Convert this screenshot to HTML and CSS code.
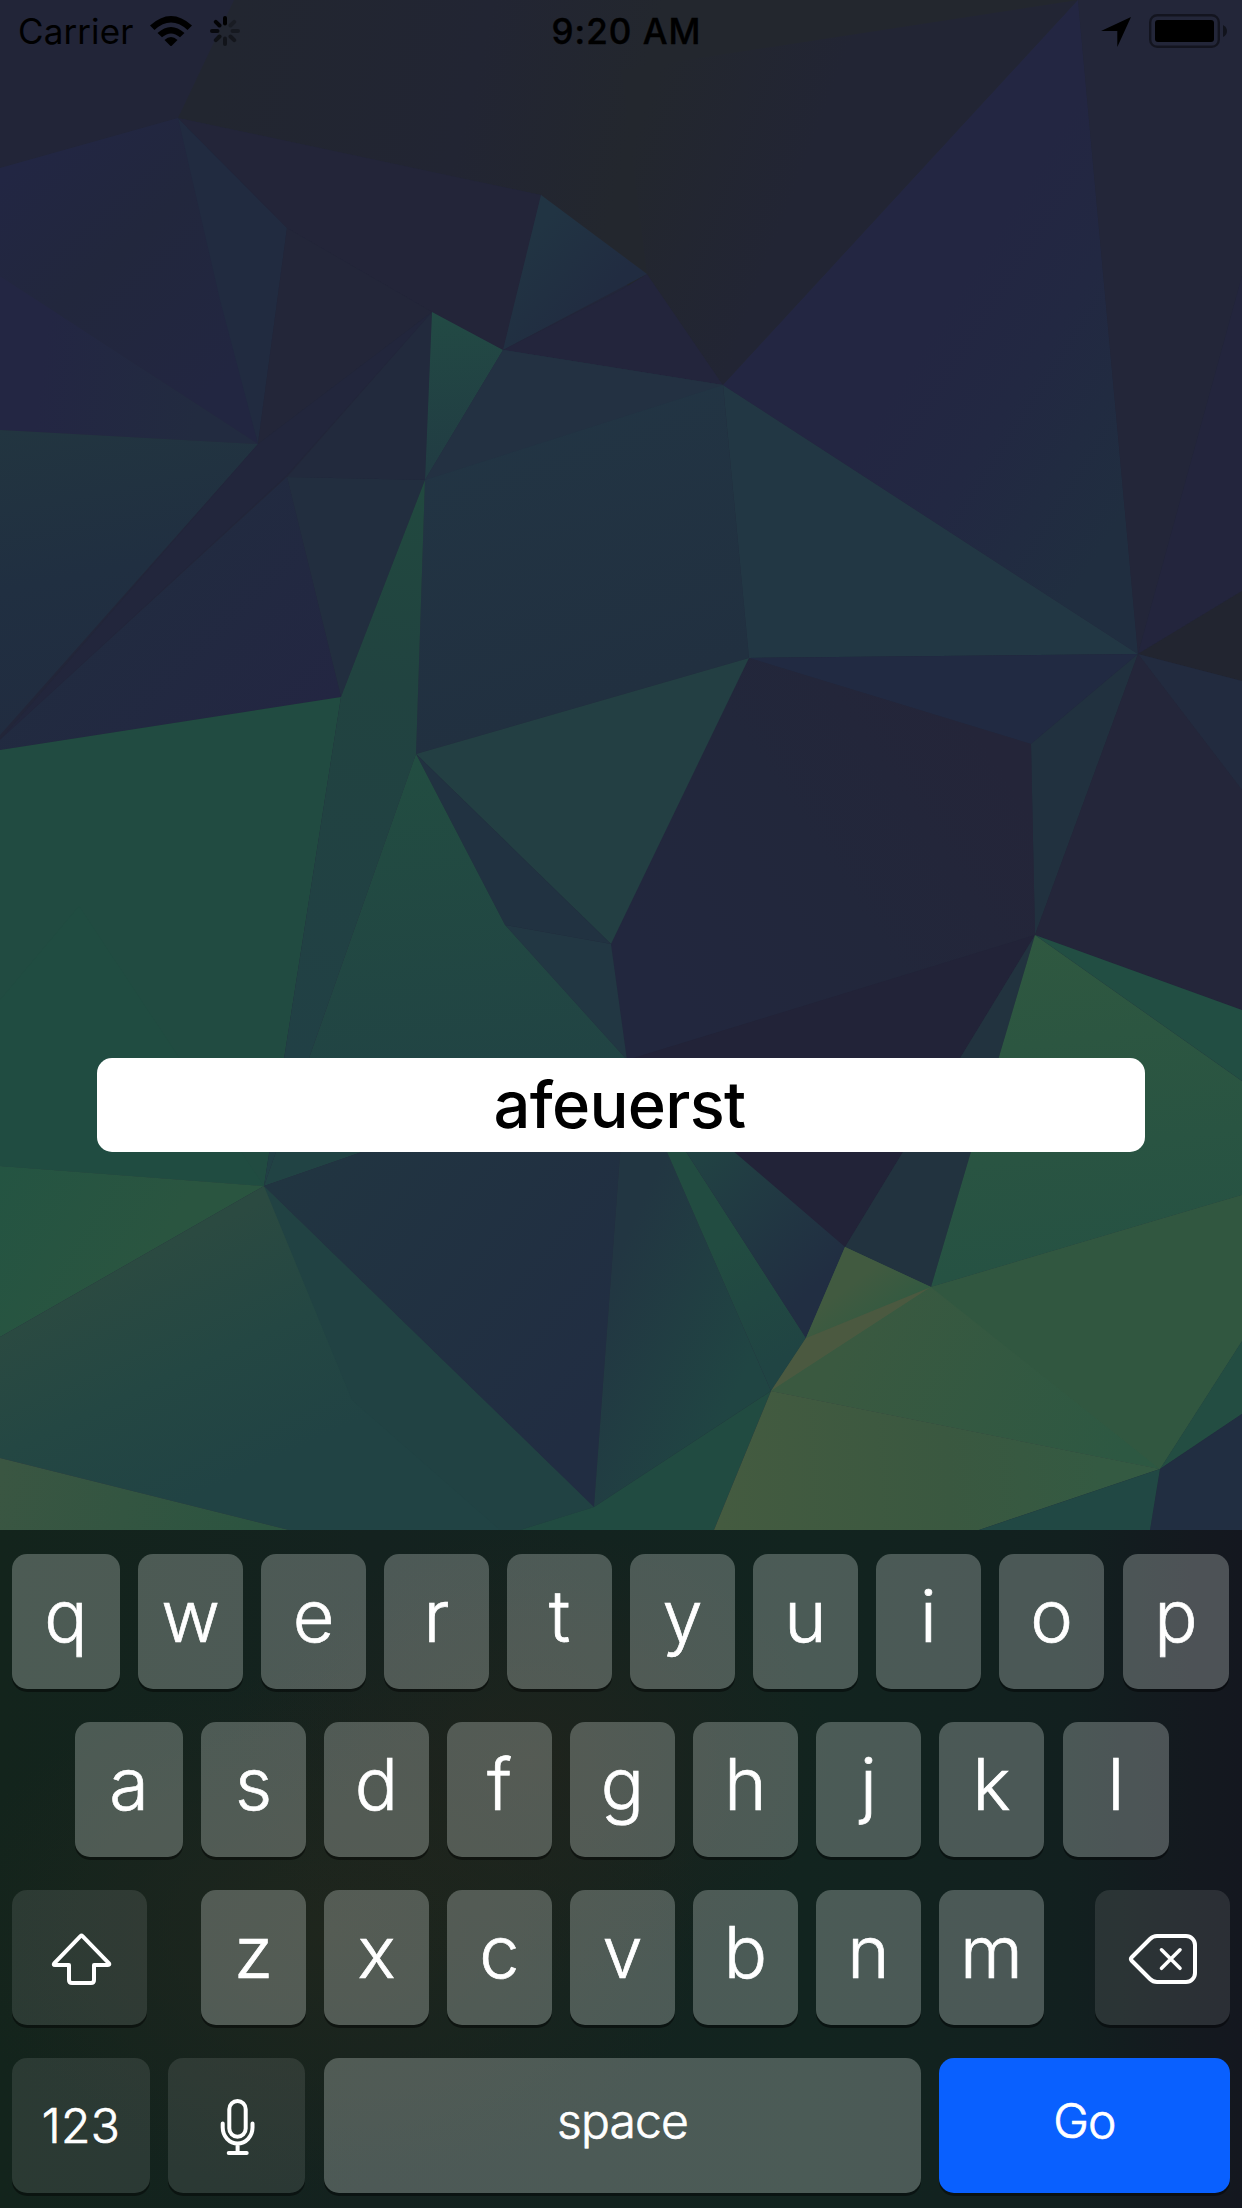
FILE: index.html
```html
<!DOCTYPE html>
<html lang="en">
<head>
<meta charset="utf-8">
<title>Username</title>
<link rel="stylesheet" href="styles.css">
</head>
<body>
<main class="screen">
  <svg class="wallpaper" viewBox="0 0 1242 1530" preserveAspectRatio="none" aria-hidden="true">
    <defs>
      <linearGradient id="sky" gradientUnits="userSpaceOnUse" x1="234" y1="0" x2="640" y2="100"><stop offset="0" stop-color="#222630"/><stop offset=".6" stop-color="#222533"/><stop offset="1" stop-color="#23272e"/></linearGradient>
      <linearGradient id="night" gradientUnits="userSpaceOnUse" x1="640" y1="120" x2="800" y2="180"><stop offset="0" stop-color="#23272e"/><stop offset="1" stop-color="#222534"/></linearGradient>
      <linearGradient id="west" gradientUnits="userSpaceOnUse" x1="0" y1="180" x2="200" y2="400"><stop offset="0" stop-color="#222643"/><stop offset=".45" stop-color="#22273d"/><stop offset="1" stop-color="#222641"/></linearGradient>
      <linearGradient id="slope" gradientUnits="userSpaceOnUse" x1="40" y1="380" x2="200" y2="400"><stop offset="0" stop-color="#232643"/><stop offset="1" stop-color="#222b40"/></linearGradient>
      <linearGradient id="peak" gradientUnits="userSpaceOnUse" x1="530" y1="240" x2="600" y2="300"><stop offset="0" stop-color="#213443"/><stop offset="1" stop-color="#212c41"/></linearGradient>
      <linearGradient id="blue" gradientUnits="userSpaceOnUse" x1="900" y1="380" x2="1120" y2="520"><stop offset="0" stop-color="#232642"/><stop offset=".4" stop-color="#222842"/><stop offset="1" stop-color="#202e40"/></linearGradient>
      <linearGradient id="lake" gradientUnits="userSpaceOnUse" x1="0" y1="430" x2="60" y2="740"><stop offset="0" stop-color="#223540"/><stop offset=".5" stop-color="#202f41"/><stop offset="1" stop-color="#212c40"/></linearGradient>
      <linearGradient id="dusk" gradientUnits="userSpaceOnUse" x1="150" y1="560" x2="310" y2="720"><stop offset="0" stop-color="#212b40"/><stop offset="1" stop-color="#232642"/></linearGradient>
      <linearGradient id="sliver" gradientUnits="userSpaceOnUse" x1="425" y1="480" x2="300" y2="1057"><stop offset="0" stop-color="#21493f"/><stop offset=".35" stop-color="#214340"/><stop offset="1" stop-color="#214045"/></linearGradient>
      <linearGradient id="fin" gradientUnits="userSpaceOnUse" x1="432" y1="312" x2="440" y2="480"><stop offset="0" stop-color="#224a44"/><stop offset="1" stop-color="#213b43"/></linearGradient>
      <linearGradient id="grove" gradientUnits="userSpaceOnUse" x1="416" y1="754" x2="450" y2="1100"><stop offset="0" stop-color="#224d41"/><stop offset="1" stop-color="#214344"/></linearGradient>
      <linearGradient id="meadow" gradientUnits="userSpaceOnUse" x1="130" y1="1262" x2="230" y2="1480"><stop offset="0" stop-color="#2b4a41"/><stop offset=".5" stop-color="#244743"/><stop offset="1" stop-color="#214344"/></linearGradient>
      <linearGradient id="hill" gradientUnits="userSpaceOnUse" x1="0" y1="1166" x2="150" y2="1260"><stop offset="0" stop-color="#245442"/><stop offset="1" stop-color="#2a5540"/></linearGradient>
      <linearGradient id="plum" gradientUnits="userSpaceOnUse" x1="680" y1="1000" x2="1010" y2="780"><stop offset="0" stop-color="#22273e"/><stop offset=".5" stop-color="#22273b"/><stop offset="1" stop-color="#242539"/></linearGradient>
      <linearGradient id="deep" gradientUnits="userSpaceOnUse" x1="300" y1="1150" x2="600" y2="1400"><stop offset="0" stop-color="#213541"/><stop offset="1" stop-color="#212d42"/></linearGradient>
      <linearGradient id="mist" gradientUnits="userSpaceOnUse" x1="610" y1="1270" x2="760" y2="1340"><stop offset="0" stop-color="#223642"/><stop offset="1" stop-color="#204543"/></linearGradient>
      <linearGradient id="stem" gradientUnits="userSpaceOnUse" x1="680" y1="1170" x2="780" y2="1360"><stop offset="0" stop-color="#224c41"/><stop offset=".4" stop-color="#224c41"/><stop offset="1" stop-color="#204443"/></linearGradient>
      <linearGradient id="wedge" gradientUnits="userSpaceOnUse" x1="700" y1="1140" x2="830" y2="1270"><stop offset="0" stop-color="#214343"/><stop offset="1" stop-color="#212e42"/></linearGradient>
      <linearGradient id="olive" gradientUnits="userSpaceOnUse" x1="720" y1="1500" x2="1100" y2="1480"><stop offset="0" stop-color="#445b40"/><stop offset=".6" stop-color="#3a5840"/><stop offset="1" stop-color="#345a42"/></linearGradient>
      <linearGradient id="glade" gradientUnits="userSpaceOnUse" x1="850" y1="1330" x2="1120" y2="1460"><stop offset="0" stop-color="#3a5940"/><stop offset="1" stop-color="#2d5842"/></linearGradient>
      <linearGradient id="moss" gradientUnits="userSpaceOnUse" x1="870" y1="1270" x2="900" y2="1310"><stop offset="0" stop-color="#415a40"/><stop offset="1" stop-color="#335a41"/></linearGradient>
      <linearGradient id="leaf" gradientUnits="userSpaceOnUse" x1="1035" y1="935" x2="1080" y2="1260"><stop offset="0" stop-color="#2f5840"/><stop offset="1" stop-color="#265243"/></linearGradient>
      <linearGradient id="corner" gradientUnits="userSpaceOnUse" x1="0" y1="1480" x2="250" y2="1530"><stop offset="0" stop-color="#3a5642"/><stop offset="1" stop-color="#2c5440"/></linearGradient>
      <linearGradient id="bay" gradientUnits="userSpaceOnUse" x1="500" y1="400" x2="600" y2="700"><stop offset="0" stop-color="#223544"/><stop offset="1" stop-color="#213040"/></linearGradient>
    </defs>
    <rect width="1242" height="1530" fill="#222639"/>
    <path fill="#222538" d="M0 0H234L178 118 0 168z"/>
    <path fill="url(#sky)" d="M234 0H1078L723 385 541 195 178 118z"/>
    <path fill="url(#night)" d="M1078 0L723 385 647 274 621 70z"/>
    <path fill="url(#west)" d="M0 168L178 118 258 444 0 276z"/>
    <path fill="url(#slope)" d="M0 276L258 444 0 430z"/>
    <path fill="#212b40" d="M178 118L287 228 258 444 220 300z"/>
    <path fill="#232539" d="M178 118L541 195 503 350 432 312 287 228z"/>
    <path fill="#232639" d="M287 228L432 312 258 444z"/>
    <path fill="url(#peak)" d="M541 195L647 274 503 350z"/>
    <path fill="#23253c" d="M503 350L621 290 647 274 723 385z"/>
    <path fill="url(#lake)" d="M0 430L258 444 0 735z"/>
    <path fill="#22263c" d="M258 444L432 312 287 475 0 740z"/>
    <path fill="#222a3d" d="M432 312L425 480 287 477z"/>
    <path fill="#222e3f" d="M425 480L341 697 300 530 287 477z"/>
    <path fill="url(#dusk)" d="M287 477L300 530 341 697 0 750V740z"/>
    <path fill="url(#fin)" d="M432 312L503 350 425 480z"/>
    <path fill="url(#bay)" d="M503 350L723 385 749 658 416 754 425 480z"/>
    <path fill="#233142" d="M503 350L723 385 425 480z"/>
    <path fill="#223744" d="M723 385L1138 654 749 658z"/>
    <path fill="url(#blue)" d="M1078 0L1138 654 723 385z"/>
    <path fill="#232639" d="M1078 0H1242V276L1138 654z"/>
    <path fill="#23253d" d="M1242 276V591L1138 654z"/>
    <path fill="#222530" d="M1242 591V681L1138 654z"/>
    <path fill="#222b3f" d="M1138 654L1242 681V790z"/>
    <path fill="#212a42" d="M749 658L1138 654 1031 744z"/>
    <path fill="#21313f" d="M1138 654L1035 935 1031 744z"/>
    <path fill="#24263a" d="M1138 654L1242 790V1010L1035 935z"/>
    <path fill="url(#plum)" d="M749 658L1031 744 1035 935 627 1060 611 944z"/>
    <path fill="#222338" d="M1035 935L845 1247 627 1060z"/>
    <path fill="#22333f" d="M1035 935L931 1287 845 1247z"/>
    <path fill="#233f43" d="M416 754L749 658 611 944z"/>
    <path fill="#213241" d="M416 754L611 944 505 925z"/>
    <path fill="#223743" d="M505 925L611 944 627 1060z"/>
    <path fill="#214b41" d="M0 750L341 697 264 1186 0 1166z"/>
    <path fill="#204c41" d="M79 906L264 1186 0 1166V1000z"/>
    <path fill="url(#sliver)" d="M425 480L416 754 264 1186 341 697z"/>
    <path fill="url(#grove)" d="M416 754L505 925 627 1060 264 1186z"/>
    <path fill="url(#hill)" d="M0 1166L264 1186 0 1337z"/>
    <path fill="url(#meadow)" d="M0 1337L264 1186 594 1507 520 1530H289L0 1458z"/>
    <path fill="#214243" d="M264 1186L594 1507 520 1530H500L352 1400z"/>
    <path fill="url(#corner)" d="M0 1458L289 1530H0z"/>
    <path fill="url(#deep)" d="M264 1186L627 1060 594 1507z"/>
    <path fill="url(#mist)" d="M627 1060L771 1391 594 1507z"/>
    <path fill="url(#stem)" d="M627 1060L806 1338 771 1391z"/>
    <path fill="url(#wedge)" d="M627 1060L845 1247 806 1338z"/>
    <path fill="#214b41" d="M771 1391L714 1530H520L594 1507z"/>
    <path fill="#365a41" d="M845 1247L931 1287 1242 1195 1242 1341 1160 1469 771 1391 806 1338z"/>
    <path fill="url(#moss)" d="M845 1247L931 1287 806 1338z"/>
    <path fill="#4b5940" d="M931 1287L806 1338 771 1391z"/>
    <path fill="url(#glade)" d="M931 1287L1160 1469 771 1391z"/>
    <path fill="url(#olive)" d="M771 1391L1160 1469 979 1530H714z"/>
    <path fill="url(#leaf)" d="M1035 935L1242 1081V1195L931 1287z"/>
    <path fill="#224e43" d="M1035 935L1242 1010V1081z"/>
    <path fill="#315740" d="M931 1287L1242 1195V1341L1160 1469z"/>
    <path fill="#234d42" d="M1242 1341V1414L1160 1469z"/>
    <path fill="#212e41" d="M1160 1469L1242 1414V1530H1150z"/>
    <path fill="#214844" d="M1160 1469L1150 1530H979z"/>
  </svg>

  <header class="status">
    <div class="status-side">
      <span class="carrier">Carrier</span>
      <svg class="wifi" viewBox="0 0 42 30"><path d="M0 9.500Q21-9.500 42 9.500L37.500 14Q21-.8 4.500 14z"/><path d="M7.500 17Q21 5 34.500 17L30 21.300Q21 13.500 12 21.300z"/><path d="M14.500 24Q21 18 27.500 24L21 30.500z"/></svg>
      <svg class="spinner" viewBox="-15 -15 30 30"><g stroke="#000" stroke-width="4" stroke-linecap="round"><path d="M0-13V-7.500"/><path d="M9.200-9.200L5.500-5.500" opacity=".25"/><path d="M13 0H7.500" opacity=".32"/><path d="M9.200 9.200L5.500 5.500" opacity=".4"/><path d="M0 13V7.500" opacity=".45"/><path d="M-9.200 9.200L-5.500 5.500" opacity=".55"/><path d="M-13 0H-7.500" opacity=".75"/><path d="M-9.200-9.200L-5.500-5.500" opacity=".9"/></g></svg>
    </div>
    <time class="clock">9:20 AM</time>
    <div class="status-side status-right">
      <svg class="location" viewBox="0 0 30 30"><path d="M30 0L16.300 30V14H0z"/></svg>
      <svg class="battery" viewBox="0 0 78 34"><rect x="1.200" y="1.200" width="68.600" height="31.600" rx="7" fill="none" stroke="#000" stroke-opacity=".45" stroke-width="2.400"/><rect x="6" y="6" width="59" height="22" rx="3"/><path d="M74 11Q78 13 78 17T74 23z" opacity=".5"/></svg>
    </div>
  </header>

  <section class="content">
    <div class="field">afeuerst</div>
  </section>

  <section class="keyboard">
    <div class="row">
      <div class="key edge">q</div><div class="key">w</div><div class="key">e</div><div class="key">r</div><div class="key">t</div><div class="key">y</div><div class="key">u</div><div class="key">i</div><div class="key">o</div><div class="key last">p</div>
    </div>
    <div class="row row-home">
      <div class="key edge">a</div><div class="key">s</div><div class="key">d</div><div class="key">f</div><div class="key">g</div><div class="key">h</div><div class="key">j</div><div class="key">k</div><div class="key last">l</div>
    </div>
    <div class="row row-shift">
      <div class="key dark square"><svg viewBox="0 0 135 135"><path d="M68.500 46.200Q69.500 45.200 70.500 46.200L97 73.300Q98 75 96 75H82V90Q82 93 79 93H60Q57 93 57 90V75H43Q41 75 42.200 73.300z"/></svg></div>
      <div class="letters"><div class="key">z</div><div class="key">x</div><div class="key">c</div><div class="key">v</div><div class="key">b</div><div class="key">n</div><div class="key">m</div></div>
      <div class="key dark square"><svg viewBox="0 0 135 135"><path d="M36.500 67.500L55 49Q58 46 62 46H91A9 9 0 0 1 100 55V83A9 9 0 0 1 91 92H62Q58 92 55 89L36.500 70.500Q35.300 69 36.500 67.500z"/><path class="thin" d="M66.500 59.800L85 78.300M85 59.800L66.500 78.300"/></svg></div>
    </div>
    <div class="row">
      <div class="key dark label numbers">123</div>
      <div class="key dark mic"><svg viewBox="0 0 137 135"><rect x="61.300" y="43" width="16.400" height="35.700" rx="8.200"/><path d="M54.700 65.500V69.500A14.900 16 0 0 0 84.500 69.500V65.500M69.600 86V95M60.700 95H78.700"/></svg></div>
      <div class="key label space">space</div>
      <div class="key label go">Go</div>
    </div>
  </section>
</main>
</body>
</html>
```
FILE: styles.css
```css
body {
  margin: 0;
  font-family: Inter, "Liberation Sans", sans-serif;
}

.screen {
  position: relative;
  display: flex;
  flex-direction: column;
  width: 1242px;
  height: 2208px;
  overflow: hidden;
  background: #15211d;
}

.wallpaper {
  position: absolute;
  top: 0;
  left: 0;
  width: 1242px;
  height: 1530px;
}

.status {
  position: relative;
  display: grid;
  grid-template-columns: 1fr auto 1fr;
  align-items: center;
  box-sizing: border-box;
  height: 60px;
  padding: 0 15px 0 18px;
  color: #000;
}

.status-side {
  display: flex;
  align-items: center;
  height: 60px;
}

.status-right {
  justify-content: flex-end;
  gap: 18px;
}

.carrier {
  width: 132px;
  font-size: 35px;
  line-height: 62px;
  letter-spacing: 0.1px;
}

.clock {
  padding-left: 8px;
  font-size: 35px;
  font-weight: 500;
  line-height: 62px;
  letter-spacing: 1px;
  -webkit-text-stroke: 0.4px #000;
}

.wifi {
  width: 42px;
  height: 30px;
}

.spinner {
  width: 30px;
  height: 30px;
  margin-left: 18px;
}

.location {
  width: 30px;
  height: 30px;
  margin-top: 1px;
}

.battery {
  width: 78px;
  height: 34px;
}

.content {
  position: relative;
  height: 1470px;
  padding: 997.5px 96.6px 0;
  box-sizing: border-box;
}

.field {
  height: 94px;
  border-radius: 15px;
  background: #fff;
  color: #000;
  font-size: 65px;
  font-weight: 500;
  line-height: 94px;
  letter-spacing: -0.7px;
  text-align: center;
  text-indent: -3px;
}

.keyboard {
  position: relative;
  display: flex;
  flex-direction: column;
  gap: 33px;
  box-sizing: border-box;
  height: 678px;
  padding: 24px 12px 15px;
  background:
    radial-gradient(ellipse 300px 230px at 530px 230px, rgba(35, 36, 28, 0.7) 0%, rgba(34, 36, 28, 0) 100%),
    radial-gradient(ellipse 380px 260px at 330px 400px, #1f261d 0%, rgba(31, 38, 29, 0) 100%),
    linear-gradient(90deg, #13241c 0%, #14221f 30%, #12241f 65%, #12201f 86%, #14191f 96%, #14171f 100%);
}

.row {
  display: flex;
  gap: 18px;
  height: 135px;
}

.row-home {
  padding-left: 63px;
}

.row-shift {
  justify-content: space-between;
}

.letters {
  display: flex;
  gap: 18px;
  margin-left: 3px;
}

.key {
  flex: none;
  box-sizing: border-box;
  width: 105px;
  height: 135px;
  border-radius: 15px;
  background: rgba(247, 255, 251, 0.25);
  box-shadow: 0 3px 0 rgba(0, 0, 0, 0.42);
  color: #fff;
  font-size: 72px;
  font-weight: 300;
  line-height: 123px;
  text-align: center;
  -webkit-text-stroke: 0.7px #fff;
}

.edge {
  width: 108px;
}

.last {
  width: 106px;
  margin-left: 1px;
}

.dark {
  background: rgba(255, 255, 255, 0.1);
}

.square {
  width: 135px;
}

.label {
  font-size: 48px;
  line-height: 126px;
  letter-spacing: -0.8px;
}

.numbers {
  width: 138px;
  line-height: 136px;
  letter-spacing: 0.4px;
}

.mic {
  width: 137px;
}

.space {
  width: 597px;
  margin-left: 1px;
}

.go {
  width: 291px;
  background: #0960ff;
}

.key svg {
  display: block;
  width: 100%;
  height: 135px;
  fill: none;
  stroke: #fff;
  stroke-width: 4;
  stroke-linecap: round;
  stroke-linejoin: round;
}

.key .thin {
  stroke-width: 3.6;
}
```
